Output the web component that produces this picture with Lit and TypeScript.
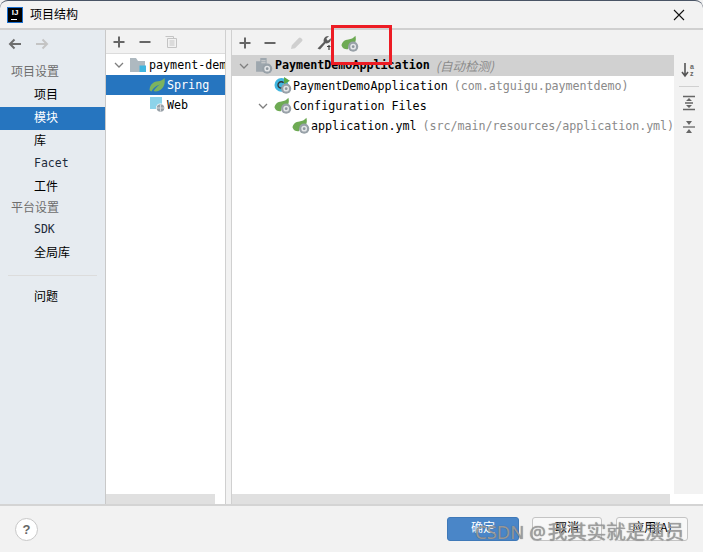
import { LitElement, html, css, svg } from "lit";
import { customElement } from "lit/decorators.js";

const gear = svg`<circle cx="11.500" cy="11" r="4.800" fill="#98a1a8"/><circle cx="11.500" cy="11" r="2.700" fill="#e4e6e8"/><circle cx="11.500" cy="11" r="1.300" fill="#8f989f"/>`;
const sleaf = svg`<path d="M0.500 10C0.800 6.500 3.500 4.500 7 4.200 9.500 4 11.800 3.200 13.600 0.800 14.200 3 14.200 5 13.500 6.500L8 8.500 6.500 13.500C4 13.800 1.500 13 0.500 10z" fill="#6eaa54"/>`;
const springGear = html`<svg class="ic18" viewBox="0 0 17 17">${sleaf}${gear}</svg>`;
const chevron = html`<svg class="chevron" viewBox="0 0 10 10"><path d="M1 3l4 4 4-4" fill="none" stroke="#7f7f7f" stroke-width="1.300"/></svg>`;

@customElement("app-root")
export class AppRoot extends LitElement {
  static styles = css`
    :host { display: block; width: 703px; height: 552px; position: relative; overflow: hidden;
      font-family: "DejaVu Sans Mono", "Noto Sans CJK SC", monospace; font-size: 11.7px; color: #000; background: #f2f2f2; }
    .win { display: flex; flex-direction: column; height: 552px; border-top: 1px solid #4a5566; box-sizing: border-box; border-radius: 8px 8px 0 0; background: #f2f2f2; }
    .cjk { font-family: "Noto Sans CJK SC", sans-serif; }
    .title { height: 27px; display: flex; align-items: center; padding: 0 7px; gap: 7px; border-bottom: 2px solid #d0d0d0; flex: none; }
    .title .name { font: 12px/24px "Noto Sans CJK SC", sans-serif; height: 27px; line-height: 25px; flex: 1; }
    .close { margin-right: 11px; display: flex; }
    .logo { width: 16px; height: 16px; background: #000; border: 1px solid #1a6fd0; color: #fff; font: bold 8px/10px "Liberation Sans", sans-serif; text-align: center; box-sizing: border-box; position: relative; }
    .logo::after { content: ""; position: absolute; left: 3px; bottom: 2px; width: 6px; height: 1px; background: #fff; }
    .main { flex: none; height: 476px; display: flex; border-bottom: 2px solid #d4d4d4; box-sizing: border-box; }
    .side { width: 105px; flex: none; background: #e6ebf0; border-right: 1px solid #c9c9c9; display: flex; flex-direction: column; }
    .arrows { height: 26px; padding: 2px 0 0 8px; display: flex; gap: 13px; flex: none; align-items: center; box-sizing: border-box; }
    .nav { padding-top: 6px; }
    .head { height: 22px; padding-left: 11px; color: #6e6e6e; font: 12px/18px "Noto Sans CJK SC", sans-serif; }
    .head.second { height: 20px; line-height: 16px; }
    .item { height: 23px; padding-left: 34px; font: 12px/19px "Noto Sans CJK SC", sans-serif; }
    .item.mono { font: 11.500px/20px "DejaVu Sans Mono", monospace; color: #1c2a3a; }
    .item.sel { background: #2675bf; color: #fff; }
    .sep { height: 1px; background: #dcdcdc; margin: 10px 8px 10px; }
    .mid { width: 119px; flex: none; display: flex; flex-direction: column; background: #fff; }
    .tb { height: 23px; flex: none; background: #f2f2f2; border-bottom: 1px solid #dcdcdc; display: flex; align-items: center; }
    .mid .tb { padding-left: 7px; gap: 14px; }
    .tree { flex: 1; overflow: hidden; padding-top: 1px; }
    .row { height: 20px; display: flex; align-items: center; white-space: pre; }
    .row svg { flex: none; }
    .row.sel { background: #2675bf; color: #fff; }
    .r-project { padding-left: 8px; }
    .r-spring { padding-left: 43px; }
    .r-web { padding-left: 44px; }
    .hsb { height: 10px; flex: none; display: flex; }
    .hsb i { display: block; height: 10px; background: #e0e0e0; }
    .hsb .mid-bar { width: 109px; }
    .hsb .right-bar { width: 438px; }
    .chevron { width: 10px; height: 10px; flex: none; }
    .folder { width: 16px; height: 14px; margin: 0 3px 0 6px; }
    .sleaf { width: 16px; height: 14px; margin-right: 2px; }
    .web { width: 16px; height: 16px; margin-right: 1px; }
    .split { width: 5px; flex: none; background: #f2f2f2; border-left: 1px solid #d0d0d0; border-right: 1px solid #d0d0d0; }
    .right { flex: 1; display: flex; flex-direction: column; min-width: 0; background: #fff; }
    .right .tb { padding-left: 7px; border-bottom: 0; height: 25px; }
    .i12 { width: 12px; height: 12px; }
    .i14 { width: 14px; height: 14px; }
    .minus { margin-left: 13px; }
    .pencil { margin-left: 14px; }
    .wrench { width: 17px; height: 17px; margin-left: 12px; }
    .ic18 { width: 18px; height: 18px; }
    .tb .ic18 { margin-left: 8px; margin-top: 2px; }
    .body { flex: 1; display: flex; min-height: 0; }
    .rtree { flex: 1; min-width: 0; overflow: hidden; }
    .rtree .row { height: 20px; }
    .rtree .row span { margin-bottom: 1px; }
    .rtree .row.top { height: 21px; background: #d1d1d1; font-weight: bold; padding-left: 7px; }
    .rtree .row.top .ic18 { margin-right: 2px; }
    .rtree .chevron { margin-right: 6px; }
    .rtree .ic18 { margin-right: 1px; }
    .r-class { padding-left: 42px; }
    .r-config { padding-left: 26px; }
    .r-yml { padding-left: 60px; }
    .gray { color: #8a8a8a; margin-left: 6px; letter-spacing: -0.05px; }
    .it { font-style: italic; font-weight: normal; font-size: 12.500px; }
    .vtb { width: 29px; flex: none; background: #f2f2f2; display: flex; flex-direction: column; align-items: center; padding-top: 7px; box-sizing: border-box; gap: 8px; }
    .vtb hr { width: 20px; height: 1px; border: 0; margin: 0; background: #d0d0d0; }
    .vtb svg { width: 16px; height: 16px; }
    .bottom { flex: 1; display: flex; align-items: center; padding: 0 15px; }
    .help { width: 21px; height: 21px; border-radius: 50%; background: #fff; border: 1px solid #c8c8c8; color: #666; font: bold 13px/21px "Liberation Sans", sans-serif; text-align: center; margin-right: auto; }
    .btn { height: 22px; border-radius: 3px; font: 12px/18px "Noto Sans CJK SC", sans-serif; text-align: center; border: 1px solid #c4c4c4; background: #f8f8f8; }
    .btn.ok { width: 70px; background: #4a86c8; border-color: #3f79b8; color: #fff; }
    .btn.c { width: 68px; margin-left: 13px; }
    .btn.a { width: 70px; margin-left: 14px; }
    .red { position: absolute; left: 331px; top: 25px; width: 61px; height: 40px; border: 3px solid #ed1c24; box-sizing: border-box; }
    .wm { position: absolute; left: 475px; top: 517px; font: 18.500px/28px "Noto Sans", sans-serif; color: rgba(160,160,160,0.9); text-shadow: 0 0 1px rgba(70,70,70,0.7); white-space: nowrap; }
    .wm span { font: 19.500px/28px "Noto Sans CJK SC", sans-serif; margin-left: 2px; }
  `;

  render() {
    return html`
      <div class="win">
        <div class="title">
          <div class="logo">IJ</div>
          <div class="name">项目结构</div>
          <div class="close"><svg width="12" height="12" viewBox="0 0 12 12"><path d="M1 1l10 10M11 1L1 11" stroke="#111" stroke-width="1.100"/></svg></div>
        </div>
        <div class="main">
          <div class="side">
            <div class="arrows">
              <svg width="14" height="12" viewBox="0 0 14 12"><path d="M13 6H2M6.500 1.500L2 6l4.500 4.500" fill="none" stroke="#6e6e6e" stroke-width="2"/></svg>
              <svg width="14" height="12" viewBox="0 0 14 12"><path d="M1 6h11M7.500 1.500L12 6l-4.500 4.500" fill="none" stroke="#c4c4c4" stroke-width="2"/></svg>
            </div>
            <div class="nav">
              <div class="head">项目设置</div>
              <div class="item">项目</div>
              <div class="item sel">模块</div>
              <div class="item">库</div>
              <div class="item mono">Facet</div>
              <div class="item">工件</div>
              <div class="head second">平台设置</div>
              <div class="item mono">SDK</div>
              <div class="item">全局库</div>
              <div class="sep"></div>
              <div class="item">问题</div>
            </div>
          </div>
          <div class="mid">
            <div class="tb">
              <svg class="i12" viewBox="0 0 12 12"><path d="M6 0.500v11M0.500 6h11" stroke="#666" stroke-width="2"/></svg>
              <svg class="i12" viewBox="0 0 12 12"><path d="M0.500 6h11" stroke="#666" stroke-width="2"/></svg>
              <svg class="i12" viewBox="0 0 12 12"><path d="M0.500 0.500h8v2M2.500 2.500h9v9h-9z" fill="none" stroke="#c4c4c4"/><path d="M4.500 5h5M4.500 7h5M4.500 9h5" stroke="#c4c4c4"/></svg>
            </div>
            <div class="tree">
              <div class="row r-project">${chevron}<svg class="folder" viewBox="0 0 16 14"><path d="M0 0h6l2 3h7v11H0z" fill="#aeb9c0"/><rect x="9.500" y="7.500" width="6.500" height="6.500" fill="#40b6e0"/></svg>payment-dem</div>
              <div class="row sel r-spring"><svg class="sleaf" viewBox="0 0 16 14"><path d="M0.500 12C1 6 5 3.500 9 3.300 11.500 3.200 14 2 15.500 0 16.200 4 15.500 8 13 10.500 10.500 13 7 14 4.500 13 6 10.500 8.500 8 11 6.500 7.500 7.500 4 10 2.500 13.500 1.800 13.300 1 12.800 0.500 12z" fill="#7cb35e"/></svg>Spring</div>
              <div class="row r-web"><svg class="web" viewBox="0 0 16 16"><rect x="0" y="0" width="12" height="12" fill="#8cd3ea"/><circle cx="10.500" cy="11" r="4.500" fill="#fff"/><circle cx="10.500" cy="11" r="3.800" fill="#98a1a8"/><path d="M7 11h7M10.500 7.500v7" stroke="#e4e6e8" stroke-width="0.800"/></svg>Web</div>
            </div>
            <div class="hsb"><i class="mid-bar"></i></div>
          </div>
          <div class="split"></div>
          <div class="right">
            <div class="tb">
              <svg class="i12" viewBox="0 0 12 12"><path d="M6 0.500v11M0.500 6h11" stroke="#666" stroke-width="2"/></svg>
              <svg class="i12 minus" viewBox="0 0 12 12"><path d="M0.500 6h11" stroke="#666" stroke-width="2"/></svg>
              <svg class="i14 pencil" viewBox="0 0 14 14"><path d="M1 13l.8-3.800 7-7.200a1.500 1.500 0 0 1 2.200 0l1 1a1.500 1.500 0 0 1 0 2.200l-7 7z" fill="#cfcfcf"/></svg>
              <svg class="wrench" viewBox="0 0 17 17"><path d="M1.500 14.500L7.800 8C7 5 9 1.500 13 2L10.300 4.800 11.800 6.700 14.800 4.200C15.300 7.500 12.500 10 9.500 9.300L4 15.500z" fill="#5c5c5c"/><path d="M11 12.500l3.500 0M13 11l0 5" stroke="#3f3f3f" stroke-width="1.200"/></svg>
              <svg class="ic18" viewBox="0 0 17 17">${sleaf}${gear}</svg>
            </div>
            <div class="body">
              <div class="rtree">
                <div class="row top">${chevron}<svg class="ic18" viewBox="0 0 17 17"><path d="M1 4h4v10H1zM5 1h6v13H5z" fill="#9ea7ae"/><path d="M6 3.500h4M6 5.500h4" stroke="#d1d1d1"/>${gear}</svg><span>PaymentDemoApplication</span><span class="gray it cjk">(自动检测)</span></div>
                <div class="row r-class"><svg class="ic18" viewBox="0 0 17 17"><circle cx="7" cy="7.500" r="6.500" fill="#40b6e0"/><path d="M9 5.500A3 3 0 1 0 9 9.500" fill="none" stroke="#30363a" stroke-width="1.300"/><path d="M9.500 0l5.500 3.500-5.500 3.500z" fill="#59a845"/>${gear}</svg><span>PaymentDemoApplication</span><span class="gray">(com.atguigu.paymentdemo)</span></div>
                <div class="row r-config">${chevron}${springGear}<span>Configuration Files</span></div>
                <div class="row r-yml">${springGear}<span>application.yml</span><span class="gray">(src/main/resources/application.yml)</span></div>
              </div>
              <div class="vtb">
                <svg viewBox="0 0 16 16"><path d="M4 1v12M1 10l3 4 3-4" fill="none" stroke="#555" stroke-width="1.600"/><text x="9" y="7" font-size="7" font-weight="bold" fill="#666" font-family="Liberation Sans">a</text><text x="9" y="14" font-size="7" font-weight="bold" fill="#666" font-family="Liberation Sans">z</text></svg>
                <hr />
                <svg viewBox="0 0 16 16"><path d="M2 1.500h12M2 14.500h12M4 8h8" stroke="#666" stroke-width="1.300"/><path d="M8 3l3 3H5zM8 13l3-3H5z" fill="#666"/></svg>
                <svg viewBox="0 0 16 16"><path d="M2 8h12" stroke="#666" stroke-width="1.300"/><path d="M5 2h6L8 6zM5 14h6L8 10z" fill="#666"/></svg>
              </div>
            </div>
            <div class="hsb"><i class="right-bar"></i></div>
          </div>
        </div>
        <div class="bottom">
          <div class="help">?</div>
          <div class="btn ok">确定</div>
          <div class="btn c">取消</div>
          <div class="btn a">应用(A)</div>
        </div>
      </div>
      <div class="red"></div>
      <div class="wm">CSDN @<span>我其实就是演员</span></div>
    `;
  }
}
